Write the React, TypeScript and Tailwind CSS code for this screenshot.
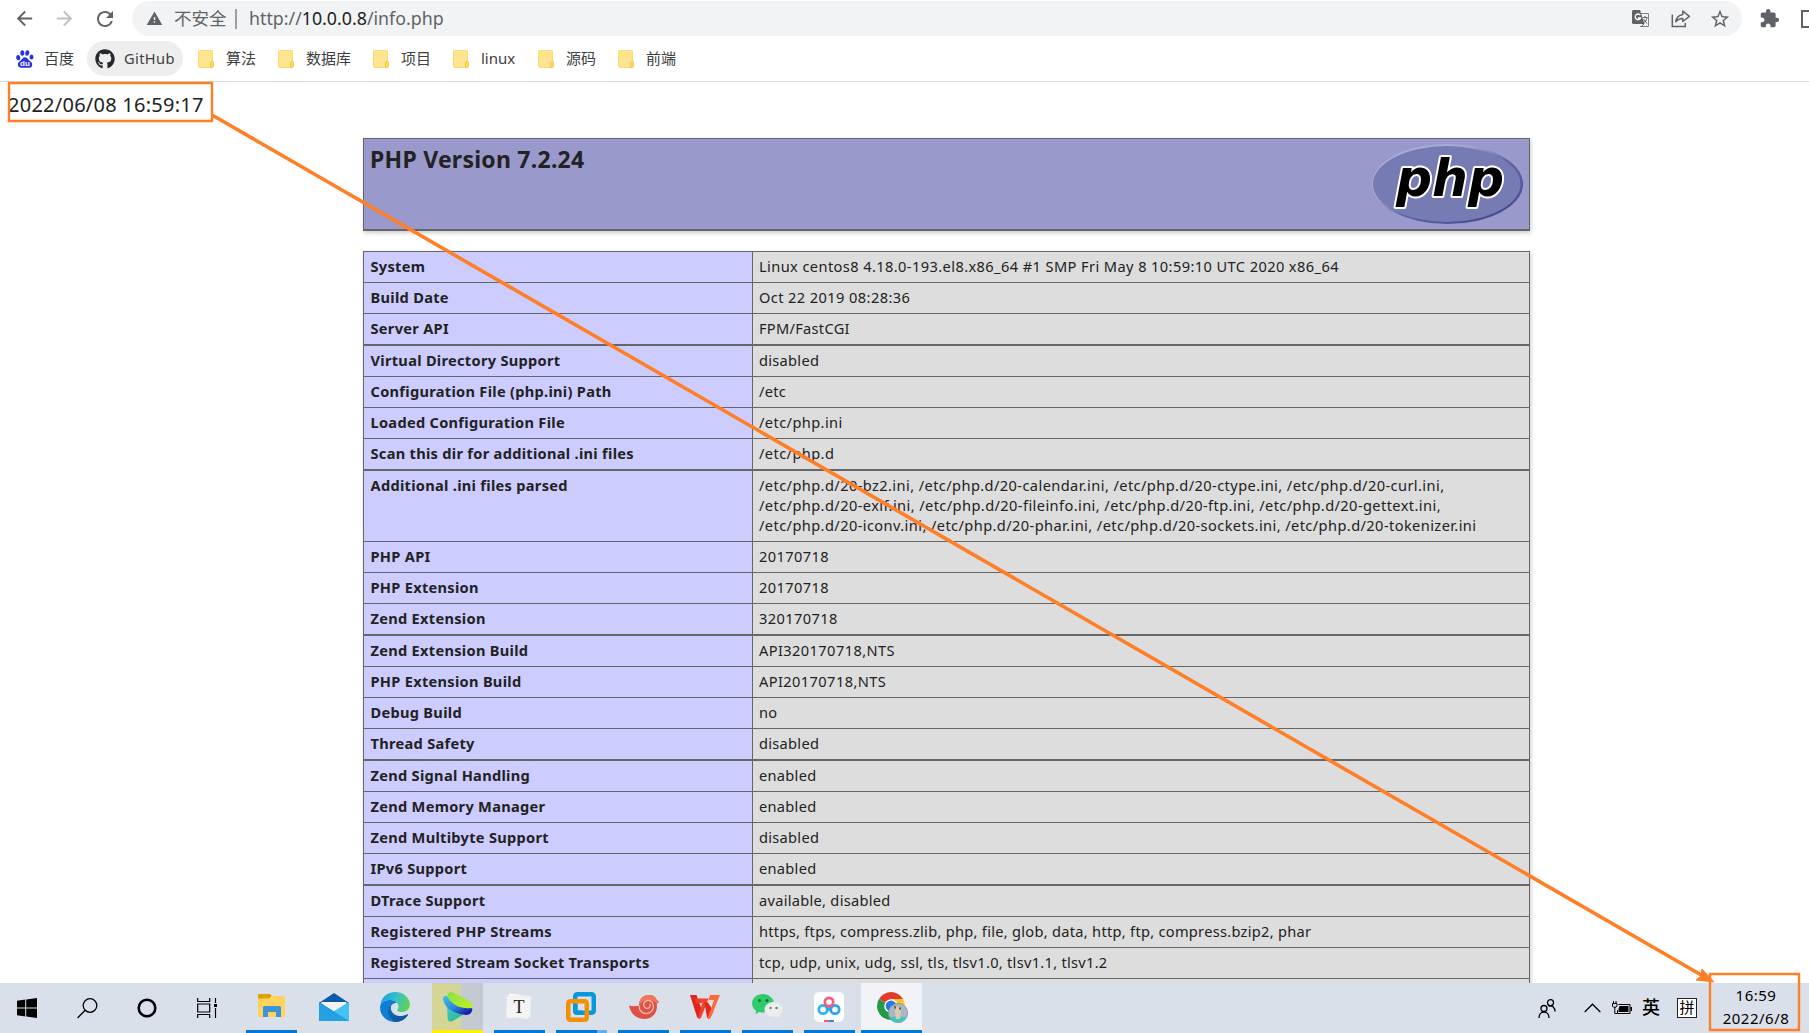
import React from "react";
import { FaGithub } from "react-icons/fa";
import { MdArrowBack, MdArrowForward, MdExtension, MdRefresh, MdStarBorder, MdWarning } from "react-icons/md";

type Row = { k: string; v: React.ReactNode; thick?: boolean; wide?: boolean };

const rows: Row[] = [
  { k: "System", v: "Linux centos8 4.18.0-193.el8.x86_64 #1 SMP Fri May 8 10:59:10 UTC 2020 x86_64", wide: true },
  { k: "Build Date", v: "Oct 22 2019 08:28:36", wide: true },
  { k: "Server API", v: "FPM/FastCGI", thick: true },
  { k: "Virtual Directory Support", v: "disabled" },
  { k: "Configuration File (php.ini) Path", v: "/etc" },
  { k: "Loaded Configuration File", v: "/etc/php.ini", wide: true },
  { k: "Scan this dir for additional .ini files", v: "/etc/php.d", thick: true, wide: true },
  {
    k: "Additional .ini files parsed",
    wide: true,
    v: (
      <>
        /etc/php.d/20-bz2.ini, /etc/php.d/20-calendar.ini, /etc/php.d/20-ctype.ini, /etc/php.d/20-curl.ini,
        <br />
        /etc/php.d/20-exif.ini, /etc/php.d/20-fileinfo.ini, /etc/php.d/20-ftp.ini, /etc/php.d/20-gettext.ini,
        <br />
        /etc/php.d/20-iconv.ini, /etc/php.d/20-phar.ini, /etc/php.d/20-sockets.ini, /etc/php.d/20-tokenizer.ini
      </>
    ),
  },
  { k: "PHP API", v: "20170718", wide: true },
  { k: "PHP Extension", v: "20170718", wide: true },
  { k: "Zend Extension", v: "320170718", thick: true, wide: true },
  { k: "Zend Extension Build", v: "API320170718,NTS", wide: true },
  { k: "PHP Extension Build", v: "API20170718,NTS", wide: true },
  { k: "Debug Build", v: "no" },
  { k: "Thread Safety", v: "disabled", thick: true },
  { k: "Zend Signal Handling", v: "enabled" },
  { k: "Zend Memory Manager", v: "enabled" },
  { k: "Zend Multibyte Support", v: "disabled" },
  { k: "IPv6 Support", v: "enabled", thick: true },
  { k: "DTrace Support", v: "available, disabled" },
  { k: "Registered PHP Streams", v: "https, ftps, compress.zlib, php, file, glob, data, http, ftp, compress.bzip2, phar" },
  { k: "Registered Stream Socket Transports", v: "tcp, udp, unix, udg, ssl, tls, tlsv1.0, tlsv1.1, tlsv1.2" },
  { k: "", v: "" },
];

function Folder() {
  return (
    <svg width="16" height="18" viewBox="0 0 16 18" className="shrink-0">
      <rect x="0.5" y="0.5" width="14" height="17" rx="1" fill="#ffe590" stroke="#f9dc6e" />
      <path d="M12.5 17.2v-4.4l1.2-1.6h.8l1 1v4.4l-.6.8h-2.4z" fill="#fbdc62" stroke="#efc530" strokeWidth=".8" />
    </svg>
  );
}

function Baidu() {
  return (
    <svg width="18" height="18" viewBox="0 0 18 18" fill="#2932e1" className="shrink-0">
      <ellipse cx="2.2" cy="7.6" rx="2" ry="2.6" transform="rotate(-10 2.2 7.6)" />
      <ellipse cx="6.3" cy="3" rx="2" ry="2.8" />
      <ellipse cx="11.3" cy="3" rx="2" ry="2.8" transform="rotate(10 11.3 3)" />
      <ellipse cx="15.5" cy="7" rx="2" ry="2.5" />
      <path d="M9 7.300c1.800 0 2.800 1.900 4.200 3.100 2 1.500 3.400 2.600 2.900 5-.6 2.700-3.200 2.600-7.100 2.300-3.600.4-6.200.2-7-2.200-.7-2.500.9-3.700 2.800-5.100C6.300 9.200 7.200 7.300 9 7.300z" />
      <text x="4" y="15.800" fontSize="8" fontWeight="bold" fontFamily="Liberation Sans" fill="#fff">du</text>
    </svg>
  );
}

function Bookmark({ label, w }: { label: string; w: string }) {
  return (
    <div className={`flex shrink-0 items-center gap-[12px] ${w}`}>
      <Folder />
      <span className="whitespace-nowrap">{label}</span>
    </div>
  );
}

function Toolbar() {
  return (
    <div className="flex h-[37px] items-center text-[#5f6368]">
      <div className="flex w-[132px] shrink-0 items-center">
        <MdArrowBack className="ml-[13px] size-[23px]" />
        <MdArrowForward className="ml-[17px] size-[23px] text-[#bdc1c6]" />
        <MdRefresh className="ml-[17px] size-[24px]" />
      </div>
      <div className="flex h-[35px] w-[1610px] shrink-0 items-center rounded-full bg-[#f1f3f4]">
        <MdWarning className="ml-[14px] size-[17px]" />
        <span className="ml-[11px] w-[55px] text-[17.500px]">不安全</span>
        <span className="ml-[6px] h-[20px] w-[2px] bg-[#9aa0a6]" />
        <span className="ml-[12px] text-[17.800px]">
          http://<span className="text-[#202124]">10.0.0.8</span>/info.php
        </span>
        <div className="ml-auto mr-[11px] flex items-center">
          <svg width="18" height="18" viewBox="0 0 18 18">
            <path d="M9 3.500h7.500v13H8" fill="none" stroke="#80868b" />
            <path d="M1 0h7l4.500 14H1.500Q0 14 0 12.500V1.500Q0 0 1 0z" fill="#5f6368" />
            <path d="M8.300 5.100A2.800 2.800 0 1 0 8.600 8H6" fill="none" stroke="#fff" strokeWidth="1.300" />
            <path d="M10.500 7.500h5M13 6v1.500M15 8c-.7 2.400-2 4-3.800 5.300M11.500 9l3.500 4.500M9 17l3-3.200" fill="none" stroke="#5f6368" strokeWidth="1" />
          </svg>
          <svg width="20" height="19" viewBox="0 0 20 19" className="ml-[21px]" fill="none" stroke="#5f6368" strokeWidth="1.500">
            <path d="M1.300 5.500v12h13v-3.500" />
            <path d="M4.800 12.800C5.400 8.500 7.800 6 11.800 5.400V2l6.600 5.300-6.600 5.200V9.600c-3.200 0-5.200.8-7 3.200z" strokeLinejoin="round" />
          </svg>
          <MdStarBorder className="ml-[18px] size-[22px]" />
        </div>
      </div>
      <MdExtension className="ml-[17px] size-[21px] shrink-0" />
      <span className="ml-[21px] h-[18px] w-[18px] shrink-0 border-2 border-[#5f6368]" />
    </div>
  );
}

function Bookmarks() {
  return (
    <div className="flex h-[45px] items-center border-b border-[#d9dadc] pb-[1px] text-[15px] text-[#3c4043]">
      <div className="ml-[16px] flex w-[71px] shrink-0 items-center gap-[10px]">
        <Baidu />
        <span>百度</span>
      </div>
      <div className="mr-[15px] flex h-[35px] w-[96px] shrink-0 items-center gap-[9px] rounded-full bg-[#eeeeee] pl-[8px]">
        <FaGithub className="size-[20px] shrink-0 text-[#24292f]" />
        <span className="text-[14.600px] tracking-[0.400px]">GitHub</span>
      </div>
      <Bookmark label="算法" w="w-[80px]" />
      <Bookmark label="数据库" w="w-[95px]" />
      <Bookmark label="项目" w="w-[80px]" />
      <Bookmark label="linux" w="w-[85px]" />
      <Bookmark label="源码" w="w-[80px]" />
      <Bookmark label="前端" w="w-[80px]" />
    </div>
  );
}

function PhpLogo() {
  return (
    <svg width="151" height="80" viewBox="0 0 151 80" className="mr-[6px] mt-[5px] shrink-0">
      <defs>
        <linearGradient id="rim" x1="0" y1="0" x2="1" y2="1">
          <stop offset="0" stopColor="#b4b5dc" />
          <stop offset=".35" stopColor="#a3a4d2" />
          <stop offset=".55" stopColor="#6264a8" />
          <stop offset="1" stopColor="#3f4185" />
        </linearGradient>
      </defs>
      <ellipse cx="75.500" cy="40" rx="75.500" ry="40" fill="url(#rim)" />
      <ellipse cx="74.800" cy="40" rx="73.800" ry="38" fill="#777bb3" />
      <text x="24" y="51.500" fontSize="52" fontWeight="bold" fontStyle="italic" fontFamily="DejaVu Sans" textLength="108" lengthAdjust="spacingAndGlyphs" stroke="#fff" strokeWidth="4" strokeLinejoin="round" paintOrder="stroke" fill="#000">
        php
      </text>
    </svg>
  );
}

function Slot({ children, bar = "bg-[#0078d7]", bg = "" }: { children: React.ReactNode; bar?: string; bg?: string }) {
  return (
    <div className={`flex h-full w-[51px] shrink-0 flex-col ${bg}`}>
      <div className="flex flex-1 items-center justify-center">{children}</div>
      <div className={`h-[3px] ${bar}`} />
    </div>
  );
}

function Taskbar() {
  return (
    <div className="flex h-[50px] shrink-0 items-center bg-[#dae0ea] text-black">
      <div className="flex w-[246px] shrink-0 items-center">
        <svg width="20" height="20" viewBox="0 0 20 20" className="ml-[17px]">
          <path d="M0 2.800 8.200 1.600V9.500H0zM9.200 1.400 20 0v9.500H9.200zM0 10.500h8.200v7.900L0 17.200zM9.200 10.500H20V20L9.200 18.600z" />
        </svg>
        <svg width="21" height="21" viewBox="0 0 21 21" className="ml-[40px]" fill="none" stroke="#000" strokeWidth="1.300">
          <circle cx="13" cy="7.500" r="6.800" />
          <path d="M8.200 12.300.5 20" />
        </svg>
        <svg width="20" height="20" viewBox="0 0 20 20" className="ml-[39px]" fill="none" stroke="#000" strokeWidth="2.600">
          <circle cx="10" cy="10" r="8.300" />
        </svg>
        <svg width="20" height="20" viewBox="0 0 20 20" className="ml-[40px]" fill="none" stroke="#000" strokeWidth="1.200">
          <path d="M.7 0v3.500h12V0M.7 20v-3.500h12V20M.7 6h12v8H.7zM18.500 0v5M18.500 10v10" />
          <path d="M17 6h3v3h-3z" fill="#000" stroke="none" />
        </svg>
      </div>
      <div className="flex h-full gap-[11px]">
        <Slot>
          <svg width="28" height="24" viewBox="0 0 28 24" className="mb-[1px]">
            <path d="M0 1q0-1 1-1h11l1.500 1.500L12 5H0z" fill="#dfa000" />
            <path d="M0 4.500h11L13.500 2H26q1 0 1 1v19q0 1-1 1H1q-1 0-1-1z" fill="#ffd35c" />
            <path d="M5 23V13.500Q5 12 6.500 12h15q1.500 0 1.500 1.500V23h-5v-5h-8v5z" fill="#3f93db" />
          </svg>
        </Slot>
        <Slot bar="bg-transparent">
          <svg width="30" height="28" viewBox="0 0 30 28">
            <path d="M0 10 15 0l15 10v3H0z" fill="#0c59a4" />
            <path d="M2.500 9h25v5L15 20 2.500 13z" fill="#f1f3f6" />
            <path d="M0 9v19h30V9L15 18.500z" fill="#2ea8e5" />
            <path d="M30 9 9 22l7 6h14z" fill="#45c3f0" />
            <path d="M0 9v19h30L15 18.500z" fill="#22a0e0" />
          </svg>
        </Slot>
        <Slot bar="bg-transparent">
          <svg width="30" height="30" viewBox="0 0 30 30" className="mr-[1px]">
            <defs>
              <linearGradient id="edgeTop" x1="0" y1=".3" x2="1" y2=".6">
                <stop offset="0" stopColor="#1a9fe0" />
                <stop offset=".5" stopColor="#35c1c8" />
                <stop offset="1" stopColor="#64d64e" />
              </linearGradient>
              <linearGradient id="edgeLow" x1="0" y1="0" x2="1" y2="1">
                <stop offset="0" stopColor="#116fc0" />
                <stop offset="1" stopColor="#0c4f94" />
              </linearGradient>
            </defs>
            <path d="M.300 13C1.500 5 8 0 15 0c9 0 15 6.500 15 12.500 0 5-4 7.500-8 7.500-3.500 0-5.300-1.200-4.500-2.300C20.500 14 17 8 10.500 8 5.500 8 1.500 10 .300 13z" fill="url(#edgeTop)" />
            <path d="M.100 14.500C.500 10.500 5 8 10.500 8c2.500 0 5 1.200 6.300 3C12 11 10 14.500 11 18c1.500 5.500 9 8 16 4.500.700-.400 1 .200.700.700C25 27.500 20.500 30 15 30 7 30-.700 23.500.100 14.500z" fill="#0f7fd4" />
            <path d="M10.800 13.500C6 17 7 26 15.500 30c5.500-.200 9.800-2.800 12.200-6.800.300-.500 0-1.100-.700-.700-7 3.500-14.500 1-16-4.500-.400-1.600-.4-3-.2-4.500z" fill="url(#edgeLow)" />
          </svg>
        </Slot>
        <Slot bar="bg-[#fff100]" bg="bg-linear-to-r from-[#d5d696] from-57% to-[#c4c9d2] to-57%">
          <svg width="31" height="31" viewBox="0 0 31 31">
            <defs>
              <linearGradient id="band" x1="0" y1="0" x2="1" y2="1">
                <stop offset="0" stopColor="#3cc4ea" />
                <stop offset=".5" stopColor="#2a86de" />
                <stop offset=".85" stopColor="#1722a8" />
              </linearGradient>
              <linearGradient id="lime" x1="0" y1="0" x2="1" y2="1">
                <stop offset="0" stopColor="#8be04a" />
                <stop offset="1" stopColor="#c2f01c" />
              </linearGradient>
              <linearGradient id="teal" x1="0" y1="0" x2="1" y2="1">
                <stop offset="0" stopColor="#4cc6cf" />
                <stop offset="1" stopColor="#1fb98a" />
              </linearGradient>
            </defs>
            <path d="M5 13 23 22.500 11 30Q6.500 32 5.600 27.500z" fill="url(#teal)" />
            <path d="M1.500 6Q3.500 3.500 6 6q9 11 23 11 2 0 1 3-1.500 4-6 4Q9 22 4 15 0 9.500 1.500 6z" fill="url(#band)" />
            <path d="M5.500 4Q6.500 0 11 1.500L27.500 10q4 2.500 2 7-12 1.500-20-6Q5 7 5.500 4z" fill="url(#lime)" />
          </svg>
        </Slot>
        <Slot>
          <svg width="28" height="28" viewBox="0 0 28 28" className="mr-[2px]">
            <rect x="2" y="2" width="23" height="23" rx="2" fill="#fff" transform="rotate(7 14 14)" />
            <rect x="1.500" y="3" width="24" height="22" rx="1.500" fill="#f4f4f4" stroke="#e4e4e4" strokeWidth=".6" />
            <text x="14" y="20" textAnchor="middle" fontFamily="Liberation Serif" fontSize="18" fill="#222">T</text>
          </svg>
        </Slot>
        <Slot bar="bg-linear-to-r from-[#0078d7] from-80% to-[#62aeeb] to-80%">
          <svg width="30" height="30" viewBox="0 0 30 30" fill="none" strokeWidth="4.500" className="mr-[1px]">
            <rect x="9.250" y="2.250" width="18.500" height="18.500" rx="2" stroke="#0a99d8" />
            <rect x="2.250" y="9.250" width="18.500" height="18.500" rx="2" stroke="#f39106" />
            <path d="M9.250 12v6.750q0 2 2 2H16" stroke="#0a99d8" />
          </svg>
        </Slot>
        <Slot>
          <svg width="30" height="26" viewBox="0 0 30 26">
            <path d="M0 11.500q5 1.500 10 0C10 5 14.500 1 20 1c4 0 6.500 2 7.500 4.500L30 8l-2.200 1.500C29 18 24 25 15.500 25 8 25 1.500 20 0 11.500z" fill="#de5145" />
            <path d="M10 11.500C10 5 14.500 1 20 1c4 0 6.500 2 7.500 4.500L30 8l-2.200 1.500C22 4 13 6 10 11.500z" fill="#f0775a" />
            <path d="M10.500 11.500c-1 5 3 8.500 7.500 8s7-4.500 6.300-8.500-5-6-8-3.500-1.300 7 1.700 7 4-3 2.500-4.500" fill="none" stroke="#f4b9b0" strokeWidth="1.300" />
          </svg>
        </Slot>
        <Slot>
          <svg width="30" height="24" viewBox="0 0 30 24" className="mr-[1px]">
            <path d="M0 0h6.500l5 14L9.500 23q-1.500 1-2.500-1z" fill="#e2231f" />
            <path d="M4.500 3.500h9.500L12 8H6z" fill="#f5392b" />
            <path d="M13.500 3.500h5L11 23q-1.500 1.500-3 0z" fill="#f5402c" />
            <path d="M14.500 7.500h3.500l5.500 9L20 23q-1.500 1.500-3-.500z" fill="#e2231f" />
            <path d="M20 0h10l-9 22q-1.500 2.500-3.500 1L24 5h-5.500z" fill="#ff6a35" />
          </svg>
        </Slot>
        <Slot>
          <svg width="31" height="24" viewBox="0 0 31 24" className="mb-[2px]">
            <path d="M11 0C5 0 0 4 0 9.500c0 3 1.500 5.500 4 7.200L3.500 20l3.700-2c1.300.4 2.500.5 3.800.5 6 0 11-4 11-9S17 0 11 0z" fill="#2fcb6b" />
            <circle cx="7.500" cy="6.500" r="1.500" fill="#15723a" />
            <circle cx="15" cy="6.500" r="1.500" fill="#15723a" />
            <path d="M21.500 8c5 0 9 3.300 9 7.500 0 2.300-1.300 4.300-3.300 5.700l.500 2.300-2.700-1.300c-1.100.3-2.200.5-3.500.5-5 0-9-3.200-9-7.200S16.500 8 21.500 8z" fill="#eceeee" />
            <circle cx="18.500" cy="14" r="1.200" fill="#777" />
            <circle cx="24.500" cy="14" r="1.200" fill="#777" />
          </svg>
        </Slot>
        <Slot>
          <svg width="30" height="30" viewBox="0 0 30 30" className="mr-[1px]">
            <rect width="30" height="30" rx="5" fill="#fff" />
            <g fill="none" strokeWidth="2.700">
              <circle cx="9" cy="17.500" r="4.200" stroke="#26b4f2" />
              <circle cx="21" cy="17.500" r="4.200" stroke="#2aa0f5" />
              <path d="M12 14.500l3 3 3-3" stroke="#26a9f5" />
              <circle cx="15" cy="10" r="4.200" stroke="#fb5a78" />
            </g>
            <path d="M10 28h5v2h-5z" fill="#fb5a78" />
            <path d="M15 28h5v2h-5z" fill="#2a8cf0" />
          </svg>
        </Slot>
      </div>
      <div className="ml-[6px] flex h-full w-[61px] shrink-0 flex-col bg-[#f1f3f8]">
        <div className="flex flex-1 items-center justify-center pl-[2px] pt-[2px]">
          <svg width="31" height="31" viewBox="0 0 31 31">
            <circle cx="14" cy="14" r="14" fill="#fff" />
            <path d="M14 14 1.900 7A14 14 0 0 1 26.100 7z" fill="#e33b2e" />
            <path d="M14 14 1.900 7A14 14 0 0 0 14 28l6-10.500z" fill="#249a47" />
            <path d="M14 7h12.100A14 14 0 0 1 14 28l6-10.500z" fill="#fcc629" />
            <circle cx="14" cy="14" r="6.800" fill="#fff" />
            <circle cx="14" cy="14" r="5.400" fill="#2b78e4" />
            <circle cx="21" cy="21" r="9.700" fill="#a9b6c6" stroke="#777f8a" strokeWidth=".6" />
            <path d="M12.500 25.500q8.500-2 17 0-3 5.200-8.500 5.200t-8.500-5.200z" fill="#43c4bd" />
            <path d="m17 13 3 2 3-1 1 5-1 8h-4l-1-7z" fill="#d8cbae" />
            <path d="m17 13 2 2-1 3zM23 14l1 3-2 1z" fill="#3d3a36" />
          </svg>
        </div>
        <div className="h-[3px] bg-[#0078d7]" />
      </div>
      <div className="ml-auto flex h-full shrink-0 items-center">
        <svg width="18" height="19" viewBox="0 0 18 19" fill="none" stroke="#000" strokeWidth="1.300">
          <circle cx="6" cy="9.500" r="3" />
          <path d="M1 19c0-8 10-8 10 0" />
          <circle cx="12.500" cy="3.700" r="3" />
          <path d="M10.500 7.200c4-1.200 6.500 1.500 6.500 5.300" />
        </svg>
        <svg width="17" height="10" viewBox="0 0 17 10" fill="none" stroke="#000" strokeWidth="1.300" className="ml-[28px]">
          <path d="M.7 9 8.500 1.200 16.300 9" />
        </svg>
        <svg width="20" height="14" viewBox="0 0 20 14" className="mb-[1px] ml-[11px]">
          <path d="M6.500 3.500h11.500v9H5.500v-3.300" fill="none" stroke="#000" />
          <path d="M7.500 5h9v6H6.500V8zM18.500 6H20v4h-1.500z" />
          <path d="M1.500 0v2.500M4 0v2.500M.5 2.500h4.500v2.500l-1 1.200H1.500L.5 5zM2.800 6v6.500H5.500" fill="none" stroke="#000" />
        </svg>
        <span className="ml-[10px] w-[18px] pb-[2px] text-[18px] font-medium">英</span>
        <span className="ml-[17px] flex size-[20px] items-center justify-center border border-[#222] bg-white pb-[1px] text-[15px] leading-none">拼</span>
        <div className="ml-[15px] mr-[9px] flex w-[88px] flex-col items-center pb-[2px] text-[15px] leading-[23px] tracking-[0.500px]">
          <span>16:59</span>
          <span>2022/6/8</span>
        </div>
      </div>
    </div>
  );
}

export default function App() {
  return (
    <div className="relative flex h-[1033px] w-[1809px] flex-col overflow-hidden bg-white font-['Noto_Sans','Noto_Sans_CJK_SC',sans-serif]">
      <Toolbar />
      <Bookmarks />
      <main className="flex min-h-0 flex-1 flex-col overflow-hidden text-[#222222]">
        <div className="h-[56px] shrink-0 pl-[8px] pt-[9px] text-[20px] leading-[28px] tracking-[0.250px]">2022/06/08 16:59:17</div>
        <div className="ml-[363px] flex h-[93px] w-[1167px] shrink-0 justify-between border border-b-2 border-[#666666] bg-[#9999cc] shadow-[1px_2px_4px_#cccccc]">
          <h1 className="pl-[6px] pt-[3px] text-[23px] font-bold leading-[34px] tracking-[0.250px]">PHP Version 7.2.24</h1>
          <PhpLogo />
        </div>
        <div className="ml-[363px] mt-[20px] w-[1167px] shrink-0 border border-b-0 border-[#666666] text-[14.600px] leading-[20px] shadow-[1px_2px_4px_#cccccc]">
          {rows.map((r, i) => (
            <div key={i} className={`flex min-h-[31px] border-[#666666] ${r.thick ? "border-b-2" : "border-b"}`}>
              <div className="w-[389px] shrink-0 border-r border-[#666666] bg-[#ccccff] pb-[6px] pl-[6.500px] pt-[4px] font-bold tracking-[0.290px]">{r.k}</div>
              <div className={`flex-1 whitespace-nowrap bg-[#dddddd] px-[6px] pb-[6px] pt-[4px] ${r.wide ? "tracking-[0.410px]" : "tracking-[0.290px]"}`}>{r.v}</div>
            </div>
          ))}
        </div>
      </main>
      <Taskbar />
      <svg width="1809" height="1033" className="pointer-events-none absolute left-0 top-0" fill="none" stroke="#ff7f27">
        <path d="M9 83h203v38H9z" strokeWidth="2.400" />
        <path d="M1710 974h89v56h-89z" strokeWidth="2.400" />
        <path d="M212 115 1703 976" strokeWidth="3.600" />
        <path d="m1714 982-18-2 5-4 1-7z" fill="#ff7f27" strokeWidth="1" />
      </svg>
    </div>
  );
}
